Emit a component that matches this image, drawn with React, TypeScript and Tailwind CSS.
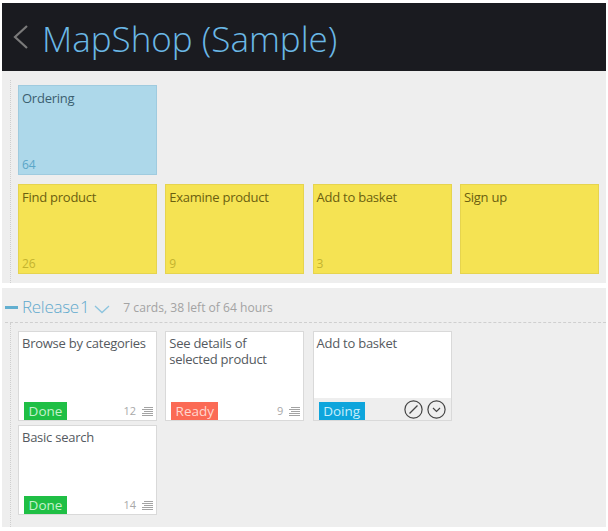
const sans = "font-['Open_Sans',sans-serif]";

const StackIcon = () => (
  <svg width="12" height="10" viewBox="0 0 12 10" fill="none" stroke="#a3a3a3" strokeWidth="1">
    <path d="M3 1.5h9M1 3.5h11M3 5.5h9M1 7.5h11M1 9.5h11" />
  </svg>
);

const Sticky = ({ title, count, blue = false }: { title: string; count?: number; blue?: boolean }) => (
  <div
    className={`flex h-[90px] w-[139px] flex-col justify-between border px-[3px] pt-[3px] pb-[1px] ${
      blue ? "border-[#9fcbdf] bg-[#add8ea]" : "border-[#e6d44e] bg-[#f5e353]"
    }`}
  >
    <div className={`text-[13px] leading-[18px] tracking-[-0.25px] ${blue ? "text-[#3c5f70]" : "text-[#6b5f10]"}`}>{title}</div>
    <div className={`text-[12px] leading-[16px] ${blue ? "text-[#5aa6c8]" : "text-[#c4b32e]"}`}>{count}</div>
  </div>
);

const statusStyle: Record<string, string> = {
  Done: "w-[43px] bg-[#1fbf45] text-[#c4f2cd]",
  Ready: "w-[47px] bg-[#fb6a55] text-[#ffd6cf]",
  Doing: "w-[46px] bg-[#0ea5dc] text-[#c8eefb]",
};

const Card = ({ title, status, hours, active = false }: { title: string; status: string; hours?: number; active?: boolean }) => (
  <div className="flex h-[90px] w-[139px] flex-col border border-[#d9d9d9] bg-white">
    <div className="flex-1 pl-[3px] pr-[8px] pt-[3px] text-[13px] leading-[16px] tracking-[-0.25px] text-[#555a60]">{title}</div>
    <div className={`flex h-[22px] items-end justify-between pl-[5px] ${active ? "bg-[#eeeeee] pr-[5px]" : "pr-[3px]"}`}>
      <div className={`flex h-[18px] items-center justify-center text-[13.5px] ${statusStyle[status]}`}>{status}</div>
      {active ? (
        <div className="flex gap-[4px] self-center">
          <svg width="19" height="19" viewBox="0 0 19 19" fill="none" stroke="#444" strokeWidth="1.2">
            <circle cx="9.5" cy="9.5" r="8.6" />
            <path d="M5.5 13.5 13.5 5.5" />
          </svg>
          <svg width="19" height="19" viewBox="0 0 19 19" fill="none" stroke="#444" strokeWidth="1.2">
            <circle cx="9.5" cy="9.5" r="8.6" />
            <path d="M6 8l3.5 3.5L13 8" />
          </svg>
        </div>
      ) : (
        <div className="flex items-center gap-[5px] pb-[3px] text-[11px] leading-[12px] text-[#a8a8a8]">
          <span>{hours}</span>
          <StackIcon />
        </div>
      )}
    </div>
  </div>
);

export default function App() {
  return (
    <div className={`h-[531px] w-[608px] bg-white pt-[3px] pl-[2px] pr-[2px] ${sans}`}>
      <header className="flex h-[68px] items-center bg-[#1a1b20] pl-[11px]">
        <svg width="15" height="24" viewBox="0 0 15 24" fill="none" stroke="#7a7a7a" strokeWidth="2.2">
          <path d="M14 1 2 12l12 11" />
        </svg>
        <h1 className="ml-[14px] mt-[3px] text-[35px] leading-none font-light text-[#6ab8e6]">MapShop (Sample)</h1>
      </header>

      <section className="h-[212px] bg-[#eeeeee] pl-[8px] pt-[9px]">
        <div className="flex h-[203px] flex-col gap-[9px] border-l border-dotted border-[#cfcfcf] pl-[7px] pt-[5px]">
          <Sticky title="Ordering" count={64} blue />
          <div className="flex gap-[8.3px]">
            <Sticky title="Find product" count={26} />
            <Sticky title="Examine product" count={9} />
            <Sticky title="Add to basket" count={3} />
            <Sticky title="Sign up" />
          </div>
        </div>
      </section>

      <section className="mt-[5px] h-[239px] bg-[#eeeeee] pt-[7px] pl-[3px]">
        <div className="flex h-[28px] items-center border-b border-dashed border-[#cfcfcf] pb-[2px]">
          <div className="h-[3px] w-[13px] bg-[#62afd0]" />
          <span className="ml-[4px] -mt-[2px] text-[17px] font-light tracking-[-0.3px] text-[#5fa9cd] [word-spacing:-3px]">Release 1</span>
          <svg className="ml-[5px] mt-[3px]" width="16" height="9" viewBox="0 0 16 9" fill="none" stroke="#8cc4de" strokeWidth="1.3">
            <path d="M1 1l7 6.5L15 1" />
          </svg>
          <span className="ml-[13px] mt-[2px] text-[12.1px] text-[#a3a3a3]">7 cards, 38 left of 64 hours</span>
        </div>
        <div className="ml-[5px] flex h-[204px] flex-col gap-[4px] border-l border-dotted border-[#cfcfcf] pl-[7px] pt-[8px]">
          <div className="flex gap-[8.3px]">
            <Card title="Browse by categories" status="Done" hours={12} />
            <Card title="See details of selected product" status="Ready" hours={9} />
            <Card title="Add to basket" status="Doing" active />
          </div>
          <Card title="Basic search" status="Done" hours={14} />
        </div>
      </section>
    </div>
  );
}
